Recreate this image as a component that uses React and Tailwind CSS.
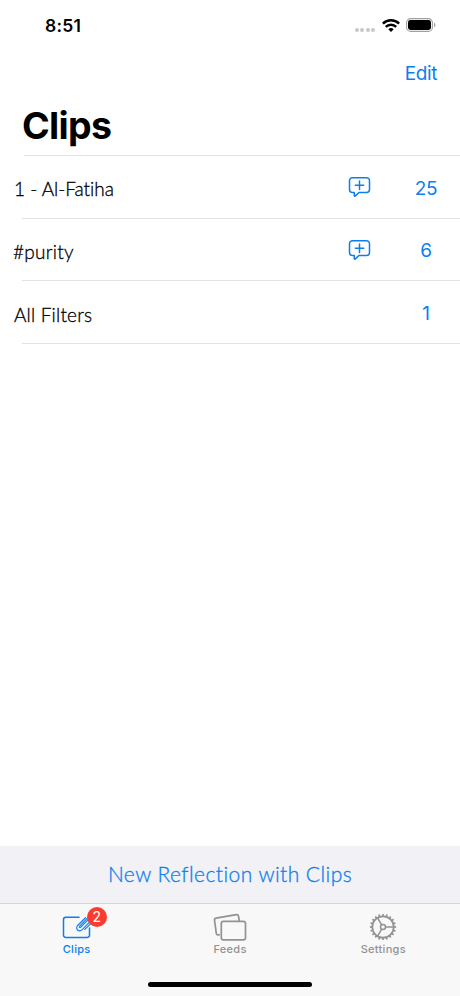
const clips = [
  { name: '1 - Al-Fatiha', count: 25, canComment: true, nameClass: 'pl-[14px] pt-[5px] tracking-[-0.02px]' },
  { name: '#purity', count: 6, canComment: true, nameClass: 'pl-[13px] pt-1.5 tracking-[0.25px]' },
  { name: 'All Filters', count: 1, canComment: false, nameClass: 'pl-[14px] pt-1.5 tracking-[0.2px]' },
];

const WifiIcon = () => (
  <svg width="18" height="13" viewBox="0 0 18 13" fill="none" stroke="#000" strokeWidth="2.5">
    <path d="M0.9 4.7a11.5 11.5 0 0 1 16.2 0" />
    <path d="M3.8 7.900a7.300 7.300 0 0 1 10.400 0" />
    <path d="M9 13l-2.700-2.700a3.800 3.800 0 0 1 5.400 0z" fill="#000" stroke="none" />
  </svg>
);

const BatteryIcon = () => (
  <svg width="30" height="14" viewBox="0 0 30 14" fill="none">
    <rect x="0.6" y="0.6" width="25.8" height="12.8" rx="4" stroke="#a0a0a0" strokeWidth="1.1" />
    <rect x="2" y="2" width="23" height="10" rx="2.4" fill="#000" />
    <path d="M28 4.8c1.9.7 1.9 3.7 0 4.4z" fill="#a0a0a0" />
  </svg>
);

const CommentIcon = () => (
  <svg width="24" height="22" viewBox="0 0 24 22" fill="none" stroke="#0b7fee" strokeWidth="1.5" strokeLinecap="round" strokeLinejoin="round">
    <path d="M4.5 1.7h14a3 3 0 0 1 3 3v8.800a3 3 0 0 1-3 3h-7.600l-3.800 3.600c-.4.300-.8.100-.8-.4v-3.200H4.500a3 3 0 0 1-3-3V4.700a3 3 0 0 1 3-3z" />
    <path d="M11.500 5v8.400M7.300 9.200h8.400" />
  </svg>
);

const ClipsIcon = () => (
  <svg width="30" height="26" viewBox="0 0 30 26" fill="none" stroke="#0b7fee" strokeWidth="1.5" strokeLinecap="round" strokeLinejoin="round">
    <path d="M17 3.200H3.800A2.300 2.300 0 0 0 1.500 5.500v15.700A2.300 2.300 0 0 0 3.800 23.500h21.400a2.300 2.300 0 0 0 2.300-2.300V14" />
    <path strokeWidth="1.200" d="M23.500 3.700l-7.600 7.500c-3.400 3.600 1 7.700 4.600 4.200L28.500 7.200M26.800 5.100l-8 8.100c-1 1-2.100-.1-1.100-1.100L25.500 4.200M28.500 9.800l-5.600 5.600" />
  </svg>
);

const FeedsIcon = () => (
  <svg width="34" height="28" viewBox="0 0 34 28" fill="none" stroke="#929292" strokeWidth="1.7" strokeLinejoin="round">
    <path d="M6.800 21.700l-1.400.2a1.900 1.900 0 0 1-2.100-1.500L1.500 7.200a1.900 1.900 0 0 1 1.500-2.100L23.400 1.700a1.900 1.900 0 0 1 2.100 1.500l.8 5" />
    <rect x="8.3" y="8.4" width="24.2" height="18.5" rx="2.2" />
  </svg>
);

const teeth = Array.from({ length: 20 }, (_, i) => i * 18);

const SettingsIcon = () => (
  <svg width="28" height="28" viewBox="0 0 28 28" fill="none" stroke="#929292">
    <circle cx="14" cy="14" r="10.7" strokeWidth="1.7" />
    <circle cx="14" cy="14" r="2.5" strokeWidth="1.5" />
    <path strokeWidth="1.5" d="M16.500 14h8.200M12.700 11.800L8.600 4.800M12.700 16.200l-4.100 7" />
    {teeth.map((angle) => (
      <path key={angle} d="M14 3.200V.9" strokeWidth="1.7" transform={`rotate(${angle} 14 14)`} />
    ))}
  </svg>
);

const StatusBar = () => (
  <div className="flex h-[50px] items-center justify-between pl-[45px] pr-6">
    <span className="pt-px text-[17.5px] font-semibold leading-none tracking-[0.2px]">8:51</span>
    <div className="flex items-center">
      <div className="mr-[7px] mt-[9px] flex gap-[1.5px]">
        {[0, 1, 2, 3].map((dot) => (
          <span key={dot} className="size-1 rounded-full bg-[#c8c8c8]" />
        ))}
      </div>
      <WifiIcon />
      <span className="ml-[6px]"><BatteryIcon /></span>
    </div>
  </div>
);

const ClipRow = ({ clip }) => (
  <li className="flex h-[62.5px] flex-col">
    <div className="flex flex-1 items-center">
      <span className={`flex-1 font-['Lato',sans-serif] text-[19px] font-light leading-6 text-black [font-variant-ligatures:none] [-webkit-text-stroke:0.3px] ${clip.nameClass}`}>
        {clip.name}
      </span>
      {clip.canComment && <span className="mr-[27px] pt-px"><CommentIcon /></span>}
      <span className="mr-[7px] w-[54px] pt-1 text-center text-[19px] leading-6 tracking-[-0.2px] text-[#0b7fee]">{clip.count}</span>
    </div>
    <div className="ml-[22px] h-px bg-[#e3e3e4]" />
  </li>
);

const Tab = ({ icon, label, active, badge }) => (
  <div className={`flex flex-1 flex-col items-center pt-[7px] ${active ? 'text-[#0b7fee]' : 'text-[#929292]'}`}>
    <div className="relative flex h-[31px] items-center">
      {icon}
      {badge && (
        <span className="absolute -right-[15px] -top-[4px] flex size-5 items-center justify-center rounded-full bg-[#fc3b30] text-[14px] leading-none text-white">
          {badge}
        </span>
      )}
    </div>
    <span className="text-[11px] font-medium leading-[15px] tracking-[0.3px]">{label}</span>
  </div>
);

const App = () => {
  return (
    <div className="flex h-screen w-full flex-col overflow-hidden bg-white font-['Inter',sans-serif] text-black">
      <StatusBar />

      <header>
        <div className="flex h-12 items-center justify-end pr-[23px]">
          <button className="text-[19px] leading-6 tracking-[-0.4px] text-[#0b7fee]">Edit</button>
        </div>
        <h1 className="h-[57px] pl-[22px] pt-[5px] text-[37.5px] font-bold leading-[46px] tracking-[-0.7px]">Clips</h1>
        <div className="ml-6 h-px bg-[#e3e3e4]" />
      </header>

      <ul className="flex-1">
        {clips.map((clip) => (
          <ClipRow key={clip.name} clip={clip} />
        ))}
      </ul>

      <button className="h-[57px] shrink-0 bg-[#f1f1f6] pb-0.5 font-['Lato',sans-serif] text-[21px] font-light tracking-[0.45px] text-[#0b7fee] [-webkit-text-stroke:0.3px]">
        New Reflection with Clips
      </button>

      <nav className="flex h-[93px] shrink-0 flex-col border-t border-[#d6d6da] bg-[#f8f8f8]">
        <div className="flex flex-1">
          <Tab icon={<ClipsIcon />} label="Clips" active badge={2} />
          <Tab icon={<FeedsIcon />} label="Feeds" />
          <Tab icon={<SettingsIcon />} label="Settings" />
        </div>
        <div className="mx-auto mb-[9px] h-[5px] w-[164px] rounded-full bg-black" />
      </nav>
    </div>
  );
};

export default App;
